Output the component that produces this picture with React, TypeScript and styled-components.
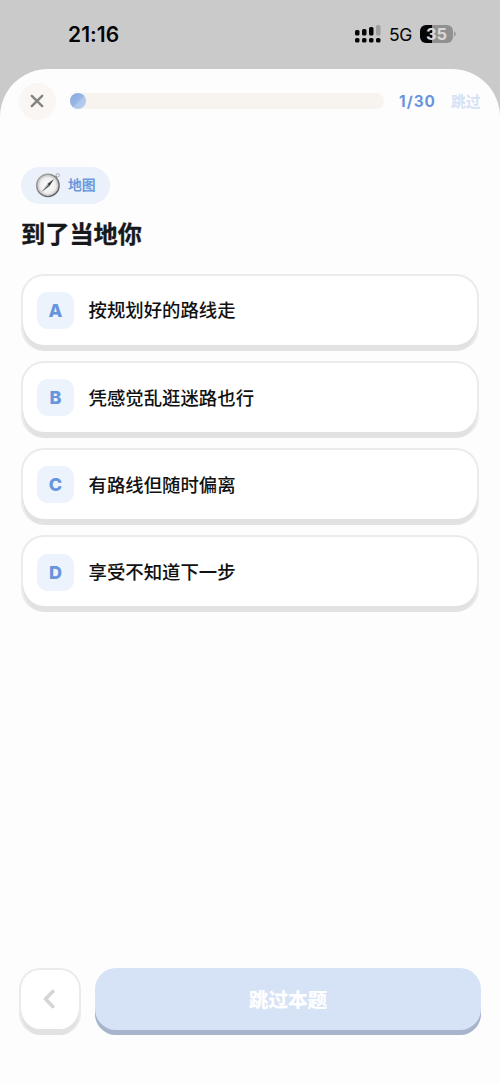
import React from 'react';
import styled, { createGlobalStyle } from 'styled-components';

const GlobalStyle = createGlobalStyle`
  * { box-sizing: border-box; }
  body {
    margin: 0;
    background: #cacaca;
    font-family: Inter, "Noto Sans CJK SC", sans-serif;
  }
  button { font: inherit; border: 0; padding: 0; margin: 0; }
`;

const Screen = styled.div`
  width: 500px;
  height: 1084px;
  display: flex;
  flex-direction: column;
  overflow: hidden;
  background: #cacaca;
`;

const StatusBar = styled.header`
  height: 68.5px;
  flex: none;
  display: flex;
  align-items: center;
  justify-content: space-between;
  padding: 0 43px 0 68px;
  color: #050505;
`;

const Clock = styled.div`
  padding-top: 1px;
  font-size: 21px;
  line-height: 24px;
  font-weight: 600;
  letter-spacing: 0.05px;
`;

const StatusIcons = styled.div`
  display: flex;
  align-items: center;
`;

const Network = styled.span`
  margin: 1px 7px 0 8px;
  width: 24px;
  font-size: 17.5px;
  line-height: 20px;
  letter-spacing: -0.4px;
`;

const Battery = styled.div`
  width: 33px;
  height: 18px;
  margin-top: -1px;
  border-radius: 6px;
  background: linear-gradient(to right, #050505 12px, #909090 12px);
  color: #d8d8d8;
  font-size: 16.5px;
  line-height: 18px;
  font-weight: 700;
  text-align: center;
`;

const Sheet = styled.main`
  flex: 1;
  display: flex;
  flex-direction: column;
  background: #fdfdfd;
  border-radius: 48px 48px 0 0;
`;

const TopBar = styled.div`
  display: flex;
  align-items: center;
  height: 37px;
  margin: 14px 19px 0 18.5px;
`;

const CloseButton = styled.button`
  width: 37px;
  height: 37px;
  display: grid;
  place-items: center;
  border-radius: 50%;
  background: #f9f6f3;
`;

const Track = styled.div`
  width: 314.5px;
  height: 16px;
  margin-left: 14px;
  border-radius: 8px;
  background: #f7f4f0;
`;

const Progress = styled.div`
  width: 16px;
  height: 16px;
  border-radius: 50%;
  background: linear-gradient(135deg, #86a9df 0%, #98b6e5 50%, #abc6ed 55%, #b8cff1 100%);
`;

const Count = styled.span`
  width: 52px;
  padding-top: 1px;
  margin-left: 15px;
  color: #6795dc;
  font-size: 15.3px;
  line-height: 20px;
  font-weight: 700;
  letter-spacing: 1.05px;
`;

const SkipLink = styled.button`
  padding-top: 1px;
  background: none;
  color: #d5e1f5;
  font-size: 14.8px;
  line-height: 20px;
  font-weight: 700;
  white-space: nowrap;
`;

const Question = styled.section`
  display: flex;
  flex-direction: column;
  align-items: flex-start;
  padding: 47px 21px 0;
`;

const Tag = styled.div`
  width: 89px;
  height: 37px;
  display: flex;
  align-items: center;
  gap: 7px;
  padding-left: 14px;
  border-radius: 19px;
  background: #eaf1fa;
  color: #6b99df;
  font-size: 13.8px;
  font-weight: 700;
`;

const TagText = styled.span`
  padding-bottom: 1.5px;
`;

const Title = styled.h1`
  margin: 13px 0 0;
  color: #17181b;
  font-size: 24.2px;
  line-height: 36px;
  font-weight: 700;
  -webkit-text-stroke: 0.3px #17181b;
`;

const Options = styled.div`
  width: 458px;
  display: flex;
  flex-direction: column;
  gap: 10.3px;
  margin-top: 21px;
`;

const Option = styled.button`
  height: 77px;
  display: flex;
  align-items: center;
  padding: 0 14px 5.6px;
  border: 2px solid #ebebeb;
  border-bottom: 0;
  border-radius: 23px;
  background: #fff;
  box-shadow: inset 0 -6px 0 #e2e2e2;
  color: #111;
  text-align: left;
`;

const Letter = styled.span`
  width: 37px;
  height: 37px;
  flex: none;
  display: grid;
  place-items: center;
  border-radius: 11px;
  background: #ecf3fc;
  color: #6795dc;
  font-size: 18px;
  font-weight: 800;
`;

const OptionText = styled.span`
  margin-left: 14.5px;
  font-size: 18.4px;
  line-height: 28px;
  font-weight: 500;
`;

const Actions = styled.footer`
  display: flex;
  gap: 14px;
  margin: auto 19px 49px 19px;
`;

const BackButton = styled.button`
  width: 62px;
  height: 67.5px;
  display: grid;
  place-items: center;
  padding-bottom: 6px;
  border: 2px solid #ebebeb;
  border-bottom: 0;
  border-radius: 21px;
  background: #fff;
  box-shadow: inset 0 -6px 0 #e2e2e2;
`;

const SkipButton = styled.button`
  flex: 1;
  height: 67.5px;
  padding-bottom: 5px;
  border-radius: 21px;
  background: #d6e2f6;
  box-shadow: inset 0 -5px 0 #a7b4cb;
  color: #fff;
  font-size: 19.6px;
  font-weight: 700;
  -webkit-text-stroke: 0.25px #fff;
`;

const SignalIcon = () => (
  <svg width="26" height="18" viewBox="0 0 26 18" fill="#050505">
    <rect x="0" y="5" width="4.5" height="5.5" rx="1.6" />
    <rect x="7" y="4" width="4.5" height="6.5" rx="1.6" />
    <rect x="14" y="2" width="4.5" height="8.5" rx="1.6" />
    <rect x="21" y="0" width="4.5" height="10.5" rx="1.6" fill="#a0a0a0" />
    <rect x="0" y="13" width="4.5" height="4.5" rx="1.6" />
    <rect x="7" y="13" width="4.5" height="4.5" rx="1.6" />
    <rect x="14" y="13" width="4.5" height="4.5" rx="1.6" />
    <rect x="21" y="13" width="4.5" height="4.5" rx="1.6" />
  </svg>
);

const BatteryCap = () => (
  <svg width="4" height="6" viewBox="0 0 4 6">
    <path d="M1 .5C3.4 1 3.4 5 1 5.500Z" fill="#999" />
  </svg>
);

const CompassIcon = () => (
  <svg width="26" height="26" viewBox="0 0 26 26" fill="none">
    <defs>
      <linearGradient id="rim" x1="3" y1="3" x2="20" y2="25" gradientUnits="userSpaceOnUse">
        <stop stopColor="#aaa" />
        <stop offset="1" stopColor="#555" />
      </linearGradient>
      <radialGradient id="dial">
        <stop stopColor="#fff" />
        <stop offset=".7" stopColor="#eee" />
        <stop offset="1" stopColor="#c4c4c4" />
      </radialGradient>
    </defs>
    <circle cx="22.700" cy="3.300" r="1.700" stroke="#a4acb5" />
    <path d="m20 6 1.500-1.500" stroke="#777" strokeWidth="2" />
    <circle cx="12.900" cy="13.400" r="11.200" fill="url(#dial)" stroke="url(#rim)" strokeWidth="1.400" />
    <circle cx="12.900" cy="13.400" r="9.500" stroke="#ccc" strokeWidth=".7" />
    <path d="m19 7-4.600 7.200-2.300-2.200Z" fill="#444" />
    <path d="m6.500 20 5.600-8 2.300 2.200Z" fill="#bbb" />
    <path d="m6.500 20 6.600-7 1.300 1.200Z" fill="#666" />
  </svg>
);

const CloseIcon = () => (
  <svg width="14" height="14" viewBox="0 0 14 14" fill="none" stroke="#858380" strokeWidth="2.400" strokeLinecap="round">
    <path d="M1.800 1.800 12.200 12.200M12.200 1.800 1.800 12.200" />
  </svg>
);

const ChevronIcon = () => (
  <svg width="14" height="20" viewBox="0 0 14 20" fill="none" stroke="#d6d6d6" strokeWidth="3.800" strokeLinecap="round" strokeLinejoin="round">
    <path d="M9.800 2.500 2.500 10l7.300 7.500" />
  </svg>
);

const options = [
  ['A', '按规划好的路线走'],
  ['B', '凭感觉乱逛迷路也行'],
  ['C', '有路线但随时偏离'],
  ['D', '享受不知道下一步'],
];

export default function App() {
  return (
    <>
      <GlobalStyle />
      <Screen>
        <StatusBar>
          <Clock>21:16</Clock>
          <StatusIcons>
            <SignalIcon />
            <Network>5G</Network>
            <Battery>35</Battery>
            <BatteryCap />
          </StatusIcons>
        </StatusBar>
        <Sheet>
          <TopBar>
            <CloseButton aria-label="关闭"><CloseIcon /></CloseButton>
            <Track><Progress /></Track>
            <Count>1/30</Count>
            <SkipLink>跳过</SkipLink>
          </TopBar>
          <Question>
            <Tag><CompassIcon /><TagText>地图</TagText></Tag>
            <Title>到了当地你</Title>
            <Options>
              {options.map(([letter, text]) => (
                <Option key={letter}>
                  <Letter>{letter}</Letter>
                  <OptionText>{text}</OptionText>
                </Option>
              ))}
            </Options>
          </Question>
          <Actions>
            <BackButton aria-label="上一题"><ChevronIcon /></BackButton>
            <SkipButton>跳过本题</SkipButton>
          </Actions>
        </Sheet>
      </Screen>
    </>
  );
}
